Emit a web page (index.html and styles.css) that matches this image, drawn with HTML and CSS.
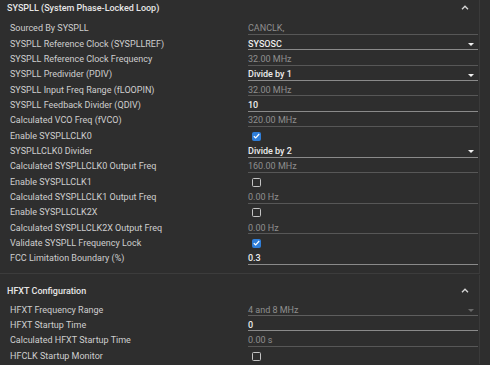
FILE: index.html
```html
<!DOCTYPE html>
<html>
<head>
<meta charset="utf-8">
<link rel="stylesheet" href="styles.css">
</head>
<body>
<div class="page">
  <section class="card card-first">
    <div class="card-header">
      <span class="card-title">SYSPLL (System Phase-Locked Loop)</span>
      <svg class="chevron" width="8" height="5" viewBox="0 0 8 5"><path d="M1 4.2 L4 1.2 L7 4.2" fill="none" stroke="#d8d8d8" stroke-width="1.3"/></svg>
    </div>
    <div class="rows">
      <div class="row"><span class="label">Sourced By SYSPLL</span><div class="field ro"><span>CANCLK,</span></div></div>
      <div class="row"><span class="label">SYSPLL Reference Clock (SYSPLLREF)</span><div class="field sel"><span>SYSOSC</span><i class="caret"></i></div></div>
      <div class="row"><span class="label">SYSPLL Reference Clock Frequency</span><div class="field ro"><span>32.00 MHz</span></div></div>
      <div class="row"><span class="label">SYSPLL Predivider (PDIV)</span><div class="field sel"><span>Divide by 1</span><i class="caret"></i></div></div>
      <div class="row"><span class="label">SYSPLL Input Freq Range (fLOOPIN)</span><div class="field ro"><span>32.00 MHz</span></div></div>
      <div class="row"><span class="label">SYSPLL Feedback Divider (QDIV)</span><div class="field edit"><span>10</span></div></div>
      <div class="row"><span class="label">Calculated VCO Freq (fVCO)</span><div class="field ro"><span>320.00 MHz</span></div></div>
      <div class="row"><span class="label">Enable SYSPLLCLK0</span><div class="check on"><svg width="7" height="6" viewBox="0 0 7 6"><path d="M0.8 3.2 L2.7 5 L6.2 1" fill="none" stroke="#fff" stroke-width="1.2"/></svg></div></div>
      <div class="row"><span class="label">SYSPLLCLK0 Divider</span><div class="field sel"><span>Divide by 2</span><i class="caret"></i></div></div>
      <div class="row"><span class="label">Calculated SYSPLLCLK0 Output Freq</span><div class="field ro"><span>160.00 MHz</span></div></div>
      <div class="row"><span class="label">Enable SYSPLLCLK1</span><div class="check"></div></div>
      <div class="row"><span class="label">Calculated SYSPLLCLK1 Output Freq</span><div class="field ro"><span>0.00 Hz</span></div></div>
      <div class="row"><span class="label">Enable SYSPLLCLK2X</span><div class="check"></div></div>
      <div class="row"><span class="label">Calculated SYSPLLCLK2X Output Freq</span><div class="field ro"><span>0.00 Hz</span></div></div>
      <div class="row"><span class="label">Validate SYSPLL Frequency Lock</span><div class="check on"><svg width="7" height="6" viewBox="0 0 7 6"><path d="M0.8 3.2 L2.7 5 L6.2 1" fill="none" stroke="#fff" stroke-width="1.2"/></svg></div></div>
      <div class="row"><span class="label">FCC Limitation Boundary (%)</span><div class="field edit"><span>0.3</span></div></div>
    </div>
  </section>
  <section class="card card-second">
    <div class="card-header">
      <span class="card-title">HFXT Configuration</span>
      <svg class="chevron" width="8" height="5" viewBox="0 0 8 5"><path d="M1 4.2 L4 1.2 L7 4.2" fill="none" stroke="#d8d8d8" stroke-width="1.3"/></svg>
    </div>
    <div class="rows">
      <div class="row"><span class="label">HFXT Frequency Range</span><div class="field ro sel-ro"><span>4 and 8 MHz</span><i class="caret dim"></i></div></div>
      <div class="row"><span class="label">HFXT Startup Time</span><div class="field edit"><span>0</span></div></div>
      <div class="row"><span class="label">Calculated HFXT Startup Time</span><div class="field ro"><span>0.00 s</span></div></div>
      <div class="row"><span class="label">HFCLK Startup Monitor</span><div class="check"></div></div>
    </div>
  </section>
</div>
</body>
</html>
```

FILE: styles.css
```css
* { box-sizing: border-box; }
html, body {
  margin: 0;
  padding: 0;
  background: #2e2e2e;
}
body {
  font-family: Roboto, "Liberation Sans", sans-serif;
  font-size: 9px;
  color: #d2d2d2;
  width: 490px;
  height: 365px;
  overflow: hidden;
}
.page {
  display: flex;
  flex-direction: column;
}
.card {
  border-right: 1px solid #3a3a3a;
  width: 480px;
}
.card-first {
  padding-bottom: 6.5px;
  border-bottom: 1px solid #3c3c3c;
}
.card-second {
  margin-top: 1px;
}
.card-header {
  display: flex;
  align-items: center;
  justify-content: space-between;
  height: 16px;
  padding-left: 7px;
  padding-right: 10px;
}
.card-first .card-header {
  margin-bottom: 5.3px;
}
.card-second .card-header {
  margin-top: 8px;
  margin-bottom: 3.5px;
}
.card-title {
  font-weight: 500;
  color: #e6e6e6;
}
.chevron { display: block; margin-top: -1px; }
.rows {
  display: flex;
  flex-direction: column;
}
.row {
  height: 15.33px;
  display: grid;
  grid-template-columns: 238px 230px;
  padding-left: 10px;
  align-items: start;
}
.label {
  line-height: 15px;
  color: #cfcfcf;
  white-space: nowrap;
}
.field {
  height: 13.6px;
  line-height: 15px;
  border-bottom: 1.2px solid #575757;
  display: flex;
  justify-content: space-between;
  align-items: flex-start;
  white-space: nowrap;
}
.field span { display: block; height: 12px; overflow: visible; }
.ro { color: #8f8f8f; }
.edit, .sel {
  color: #ececec;
  font-weight: 500;
  border-bottom-color: #8a8a8a;
}
.sel-ro { border-bottom-color: #5e5e5e; }
.caret {
  display: block;
  width: 0;
  height: 0;
  border-left: 3px solid transparent;
  border-right: 3px solid transparent;
  border-top: 3.2px solid #f0f0f0;
  margin-top: 6.3px;
  margin-right: 4px;
}
.caret.dim { border-top-color: #6a6a6a; }
.check {
  width: 9px;
  height: 9px;
  margin-top: 3px;
  margin-left: 4px;
  border: 1.3px solid #c4c4c4;
  border-radius: 1.5px;
  display: flex;
  align-items: center;
  justify-content: center;
}
.check.on {
  background: #2f7ed8;
  border-color: #2f7ed8;
}
.check svg { display: block; }
```
